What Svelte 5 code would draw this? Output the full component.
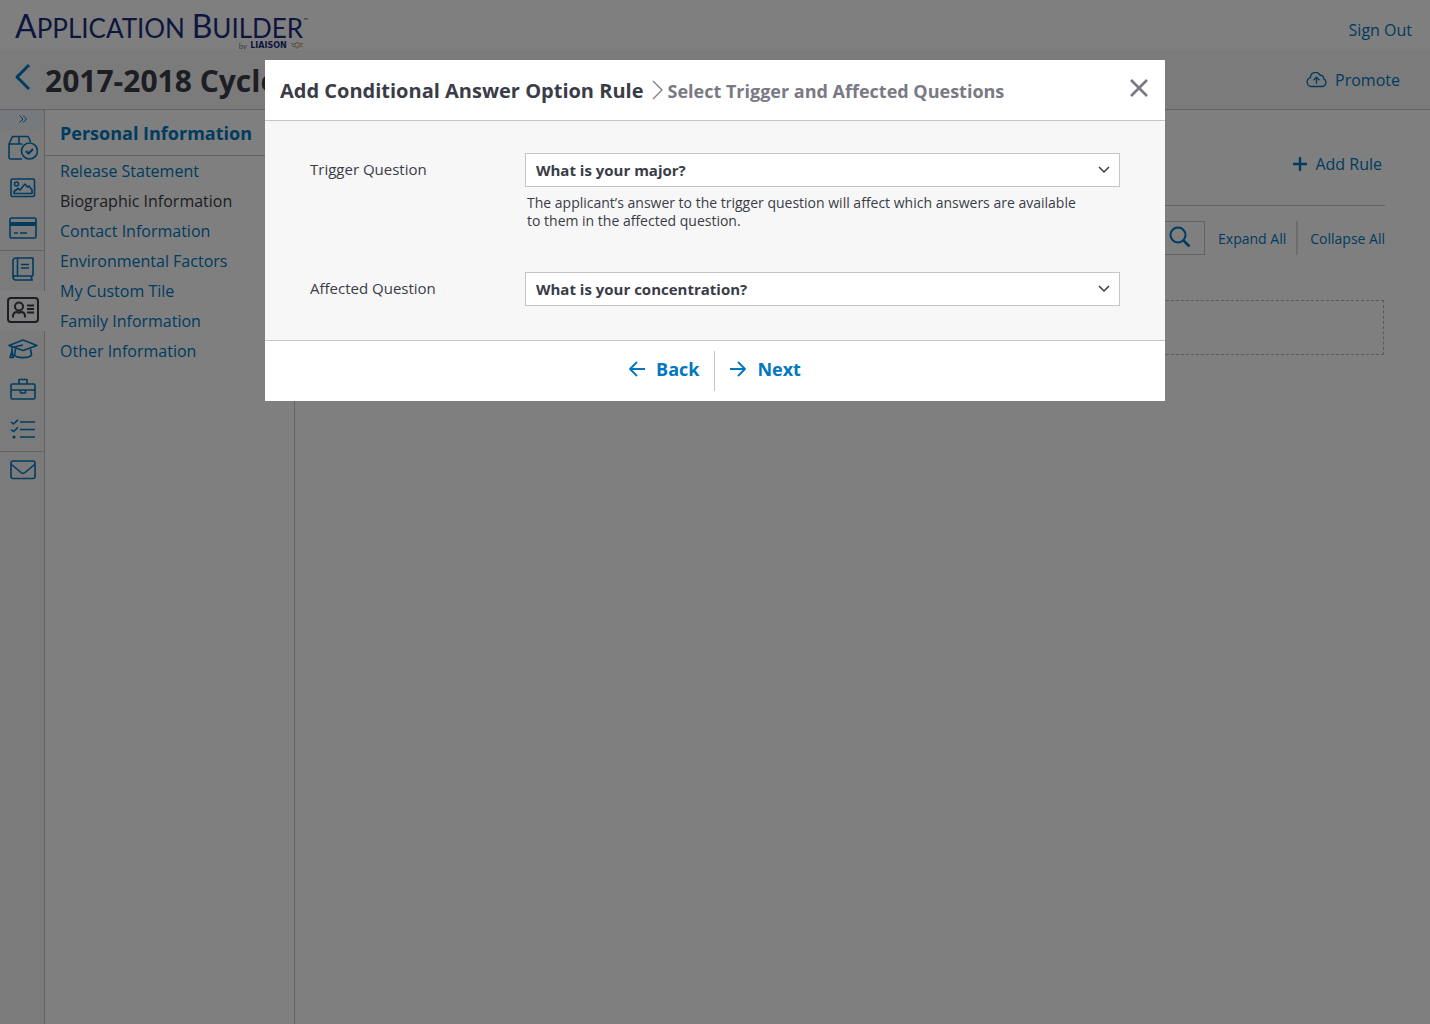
<script lang="ts">
	let sections = [
		'Release Statement',
		'Biographic Information',
		'Contact Information',
		'Environmental Factors',
		'My Custom Tile',
		'Family Information',
		'Other Information'
	];
	let current = $state('Biographic Information');

	let questions = ['What is your major?', 'What is your concentration?'];
	let trigger = $state(questions[0]);
	let affected = $state(questions[1]);
	let search = $state('');
	let open = $state(true);
</script>

{#snippet chevron()}
	<svg class="chevron" width="12" height="8" viewBox="0 0 12 8"><path d="M1 1l5 5 5-5" /></svg>
{/snippet}

<div class="page">
	<header class="brand-bar">
		<a class="brand" href="#home">
			<span class="brand-name"><b>A</b>PPLICATION <b>B</b>UILDER<sup>™</sup></span>
			<span class="brand-by">
				by <strong>LIAISON</strong>
				<svg width="14" height="8" viewBox="0 0 14 8">
					<path d="M1 1.500l3 1 3-2 3 1.500 3-.5M2 4l3 .5 2 2 3-3 2 1" stroke="#8d93b8" />
					<path d="M5 2l1 3 4-3.500M9 6l2-4 1.500 3.500" stroke="#e3d24a" />
				</svg>
			</span>
		</a>
		<a class="sign-out" href="#signout">Sign Out</a>
	</header>

	<div class="title-bar">
		<a class="back-link" href="#cycles" aria-label="Back to cycles">
			<svg width="16" height="28" viewBox="0 0 16 28"><path d="M14 2L2 14l12 12" stroke-width="3" /></svg>
		</a>
		<h1>2017-2018 Cycle</h1>
		<button class="promote" type="button">
			<svg width="21" height="16" viewBox="0 0 21 16">
				<path d="M5 14.500h11a4 4 0 0 0 1.700-7.600 3.200 3.200 0 0 0-3.700-3.600A5 5 0 0 0 4.500 5.700 4.500 4.500 0 0 0 5 14.500z" />
				<path d="M10.500 11.800V5.500M7.500 8.200l3-3 3 3" />
			</svg>
			Promote
		</button>
	</div>

	<div class="columns">
		<nav class="rail" aria-label="Areas">
			<button class="expand" type="button" aria-label="Expand menu">
				<svg width="8" height="8" viewBox="0 0 8 8"><path d="M.5.5L4 4 .5 7.500M4 .5L7.500 4 4 7.500" stroke-width="1" /></svg>
			</button>
			<a href="#products" aria-label="Products">
				<svg width="30" height="26" viewBox="0 0 30 26">
					<path d="M14 24H3a2 2 0 0 1-2-2V9l3-6.500A2 2 0 0 1 6 1.500h13a2 2 0 0 1 2 1.500l1.500 4M1 9h13.500M11 1.500V9" />
					<circle cx="21.500" cy="16" r="8" />
					<path d="M18 16l2.500 2.500 4.500-4.500" stroke-width="2.200" />
				</svg>
			</a>
			<a href="#images" aria-label="Images">
				<svg width="26" height="20" viewBox="0 0 26 20">
					<rect x="1" y="1" width="23.500" height="17.500" rx="1.500" />
					<circle cx="6.500" cy="6" r="2" />
					<path d="M4 15.500v-2l4-3 2 1.500 5-6 2.500 3 1.500-1 3 4v3.500z" />
				</svg>
			</a>
			<a href="#payments" aria-label="Payments">
				<svg width="28" height="22" viewBox="0 0 28 22">
					<rect x="1" y="1" width="26" height="20" rx="1.500" />
					<path d="M1 7h26" stroke-width="4" />
					<path d="M5 16h4M11 16h7" />
				</svg>
			</a>
			<a class="ruled" href="#catalog" aria-label="Catalog">
				<svg width="22" height="24" viewBox="0 0 22 24">
					<path d="M21 19V1H4a3 3 0 0 0-3 3v16a3 3 0 0 0 3 3h17M21 19H4a2.500 2.500 0 0 0-3 1.500M5.500 1v18M19.500 19v4M9 7.500h8M9 11h8" />
				</svg>
			</a>
			<a class="active" href="#personal" aria-label="Personal Information">
				<svg width="32" height="26" viewBox="0 0 32 26">
					<rect x="1" y="1" width="30" height="24" rx="3" stroke-width="2" />
					<circle cx="12" cy="9.500" r="4" stroke-width="2" />
					<path d="M6 20.500v-1c0-3 1.500-4.500 4-4.500l2 .8 2-.8c2.500 0 4 1.500 4 4.500v1M20 8.500h7M20 12h7M20 15.500h7" stroke-width="2" />
				</svg>
			</a>
			<a href="#academics" aria-label="Academics">
				<svg width="30" height="20" viewBox="0 0 30 20">
					<path d="M1 6.500L15 1l14 5.500-14 5L6.500 8.500zM15 6L4 8.500v9M7.500 10L6.500 16c2 3.500 15 3.500 17 0l-1-6" />
					<path d="M4 12.500l-2 6h3.500z" />
				</svg>
			</a>
			<a href="#experience" aria-label="Experience">
				<svg width="26" height="22" viewBox="0 0 26 22">
					<rect x="1" y="6" width="24" height="15" rx="1.500" />
					<path d="M9 6V1.500h8V6M1 12h24M10.500 12v3h5v-3" />
				</svg>
			</a>
			<a href="#checklist" aria-label="Checklist">
				<svg width="26" height="20" viewBox="0 0 26 20">
					<path d="M10 3h15M10 10.500h15M10 18h15M1 3l2.500 2L8 .8M1 10.500l2.500 2L8 8.300" />
					<circle cx="4" cy="18" r=".8" />
				</svg>
			</a>
			<a class="ruled" href="#mail" aria-label="Mail">
				<svg width="26" height="20" viewBox="0 0 26 20">
					<rect x="1" y="1" width="24" height="17.500" rx="2" />
					<path d="M1.500 4.500L11 12.500a3 3 0 0 0 4 0l9.500-8" />
				</svg>
			</a>
		</nav>

		<aside>
			<h2>Personal Information</h2>
			<ul>
				{#each sections as section}
					<li>
						<a href="#section" class:current={section === current} onclick={() => (current = section)}>{section}</a>
					</li>
				{/each}
			</ul>
		</aside>

		<main>
			<div class="rules-head">
				<button type="button">
					<svg width="14" height="14" viewBox="0 0 14 14"><path d="M7 0v14M0 7h14" stroke-width="2.400" /></svg>
					Add Rule
				</button>
			</div>
			<div class="tools">
				<div class="search">
					<input type="text" aria-label="Search rules" bind:value={search} />
					<button type="button" aria-label="Search">
						<svg width="22" height="22" viewBox="0 0 22 22">
							<circle cx="9" cy="9" r="7.500" stroke-width="2" /><path d="M14.500 14.500l6 6" stroke-width="2.500" />
						</svg>
					</button>
				</div>
				<button type="button">Expand All</button>
				<button class="collapse" type="button">Collapse All</button>
			</div>
			<div class="drop-area"></div>
		</main>
	</div>
</div>

{#if open}
	<div class="overlay">
		<div class="modal" role="dialog" aria-modal="true" aria-labelledby="modal-title">
			<div class="modal-head">
				<h2 id="modal-title">Add Conditional Answer Option Rule</h2>
				<svg width="12" height="20" viewBox="0 0 12 20"><path d="M1 1l9 9-9 9" stroke-width="1.200" /></svg>
				<h3>Select Trigger and Affected Questions</h3>
				<button type="button" aria-label="Close" onclick={() => (open = false)}>
					<svg width="20" height="20" viewBox="0 0 20 20"><path d="M2 2l16 16M18 2L2 18" stroke-width="2.600" /></svg>
				</button>
			</div>
			<div class="modal-body">
				<div class="field">
					<label for="trigger">Trigger Question</label>
					<div class="control">
						<div class="select">
							<select id="trigger" bind:value={trigger} aria-describedby="trigger-help">
								{#each questions as question}
									<option>{question}</option>
								{/each}
							</select>
							{@render chevron()}
						</div>
						<p id="trigger-help">
							The applicant’s answer to the trigger question will affect which answers are available to them in the
							affected question.
						</p>
					</div>
				</div>
				<div class="field">
					<label for="affected">Affected Question</label>
					<div class="control">
						<div class="select">
							<select id="affected" bind:value={affected}>
								{#each questions as question}
									<option>{question}</option>
								{/each}
							</select>
							{@render chevron()}
						</div>
					</div>
				</div>
			</div>
			<div class="modal-foot">
				<button type="button">
					<svg width="16" height="16" viewBox="0 0 16 16"><path d="M16 8H1M8 1L1 8l7 7" /></svg>
					Back
				</button>
				<button type="button">
					<svg width="16" height="16" viewBox="0 0 16 16"><path d="M0 8h15M8 1l7 7-7 7" /></svg>
					Next
				</button>
			</div>
		</div>
	</div>
{/if}

<style>
	:global(body) {
		background: #fff;
		color: #3a3c47;
		font-family: 'Open Sans', sans-serif;
		font-size: 16px;
	}

	h1,
	h2,
	h3,
	p,
	ul {
		margin: 0;
		padding: 0;
	}

	a {
		color: #0077c0;
		text-decoration: none;
	}

	button {
		display: flex;
		align-items: center;
		border: 0;
		padding: 0;
		background: none;
		color: #0077c0;
		font: inherit;
		cursor: pointer;
	}

	svg {
		display: block;
		flex: none;
		fill: none;
		stroke: currentColor;
		stroke-width: 1.8;
		stroke-linejoin: round;
	}

	.page {
		display: flex;
		flex-direction: column;
		min-height: 100vh;
	}

	.brand-bar {
		display: flex;
		justify-content: space-between;
		height: 50px;
		padding: 0 18px 0 15px;
	}

	.brand {
		display: flex;
		flex-direction: column;
		align-items: flex-end;
		padding-top: 11px;
		color: #1d2d7c;
		font-family: Lato, sans-serif;
	}

	.brand-name {
		height: 31px;
		font-size: 26px;
		line-height: 30px;
		white-space: nowrap;
	}

	.brand-name b {
		font-size: 32px;
		font-weight: 400;
	}

	sup {
		font-size: 6px;
		vertical-align: 16px;
		line-height: 6px;
	}

	.brand-by {
		display: flex;
		gap: 3px;
		padding-right: 4px;
		color: #777;
		font-size: 8px;
		line-height: 8px;
	}

	.brand-by strong {
		color: #1d2d7c;
		font-family: 'DejaVu Sans', sans-serif;
	}

	.brand-by svg {
		stroke-width: 1;
	}

	.sign-out {
		line-height: 60px;
	}

	.title-bar {
		display: flex;
		align-items: center;
		height: 59px;
		padding: 0 30px 0 15px;
		border-bottom: 1px solid #c4c4ca;
		background: #f7f7f7;
	}

	.back-link {
		width: 30px;
		padding-bottom: 5px;
	}

	h1 {
		flex: 1;
		padding-top: 2px;
		font-size: 30px;
		line-height: 40px;
	}

	.promote {
		gap: 8px;
	}

	.promote svg {
		stroke-width: 1.3;
	}

	.columns {
		display: flex;
		flex: 1;
	}

	.rail {
		width: 44px;
		border-right: 1px solid #c4c4ca;
		background: #f7f7f7;
	}

	.rail a {
		display: flex;
		align-items: center;
		justify-content: center;
		height: 36px;
		padding: 0 0 4px 1px;
	}

	.rail a svg {
		stroke-width: 1.6;
	}

	.rail .ruled {
		border-top: 1px solid #c4c4ca;
	}

	.rail .active {
		height: 38px;
		margin-right: -1px;
		padding: 0 0 2px;
		background: #fff;
		color: #3a3c47;
	}

	.expand {
		justify-content: center;
		width: 100%;
		height: 20px;
		padding: 0 0 3px 1px;
		background: #eef4f9;
	}

	aside {
		width: 249px;
		border-right: 1px solid #c4c4ca;
	}

	aside h2 {
		padding: 1px 0 0 15px;
		border-bottom: 1px solid #c4c4ca;
		color: #0077c0;
		font-size: 18px;
		line-height: 44px;
	}

	ul {
		padding-left: 15px;
		list-style: none;
	}

	li {
		line-height: 30px;
	}

	.current {
		color: #3a3c47;
	}

	main {
		flex: 1;
		padding: 0 46px 0 45px;
	}

	.rules-head {
		display: flex;
		justify-content: flex-end;
		height: 83px;
		padding: 12px 2px 0;
	}

	.rules-head button {
		gap: 8px;
	}

	.tools {
		display: flex;
		justify-content: flex-end;
		align-items: center;
		gap: 13px;
		margin-right: -1px;
		padding: 15px 0 45px;
		border-top: 1px solid #c4c4ca;
		font-size: 14px;
	}

	.search {
		display: flex;
		width: 300px;
		height: 32px;
		border: 1px solid #c4c4ca;
	}

	.search input {
		flex: 1;
		min-width: 0;
		border: 0;
		padding: 0 10px;
		font: inherit;
	}

	.search button {
		padding: 0 13px 2px 0;
	}

	.collapse {
		height: 34px;
		margin-left: -3px;
		padding-left: 12px;
		border-left: 2px solid #dadade;
	}

	.drop-area {
		height: 53px;
		border: 1px dashed #b4b4ba;
	}

	.overlay {
		position: fixed;
		inset: 0;
		padding-top: 60px;
		background: rgba(0, 0, 0, 0.5);
	}

	.modal {
		max-width: 900px;
		margin: 0 auto;
		background: #fff;
	}

	.modal-head {
		display: flex;
		align-items: center;
		height: 60px;
		padding: 0 16px 0 15px;
		border-bottom: 1px solid #c4c4ca;
	}

	.modal-head h2 {
		font-size: 20px;
	}

	.modal-head h3 {
		flex: 1;
		padding-top: 2px;
		color: #7a7984;
		font-size: 18px;
	}

	.modal-head svg {
		color: #7a7984;
	}

	.modal-head > svg {
		margin: 0 3px 0 9px;
	}

	.modal-head button {
		padding-bottom: 4px;
	}

	.modal-body {
		display: flex;
		flex-direction: column;
		gap: 42px;
		padding: 32px 45px 34px;
		border-bottom: 1px solid #c4c4ca;
		background: #f7f7f7;
		font-size: 15px;
	}

	.field {
		display: grid;
		grid-template-columns: 215px 1fr;
	}

	label {
		line-height: 32px;
	}

	.select {
		position: relative;
	}

	select {
		display: block;
		width: 100%;
		height: 34px;
		padding: 0 30px 0 10px;
		border: 1px solid #c4c4ca;
		border-radius: 0;
		appearance: none;
		background: #fff;
		color: inherit;
		font: inherit;
		font-weight: 700;
	}

	.chevron {
		position: absolute;
		top: 13px;
		right: 10px;
		stroke-width: 1.5;
		stroke-linejoin: miter;
		pointer-events: none;
	}

	p {
		padding: 7px 40px 0 2px;
		font-size: 14px;
		line-height: 18px;
	}

	.modal-foot {
		display: flex;
		justify-content: center;
		padding: 10px 0;
	}

	.modal-foot button {
		gap: 11px;
		height: 40px;
		padding: 0 15px 4px;
		font-size: 18px;
		font-weight: 700;
	}

	.modal-foot button + button {
		border-left: 1px solid #c4c4ca;
	}
</style>
